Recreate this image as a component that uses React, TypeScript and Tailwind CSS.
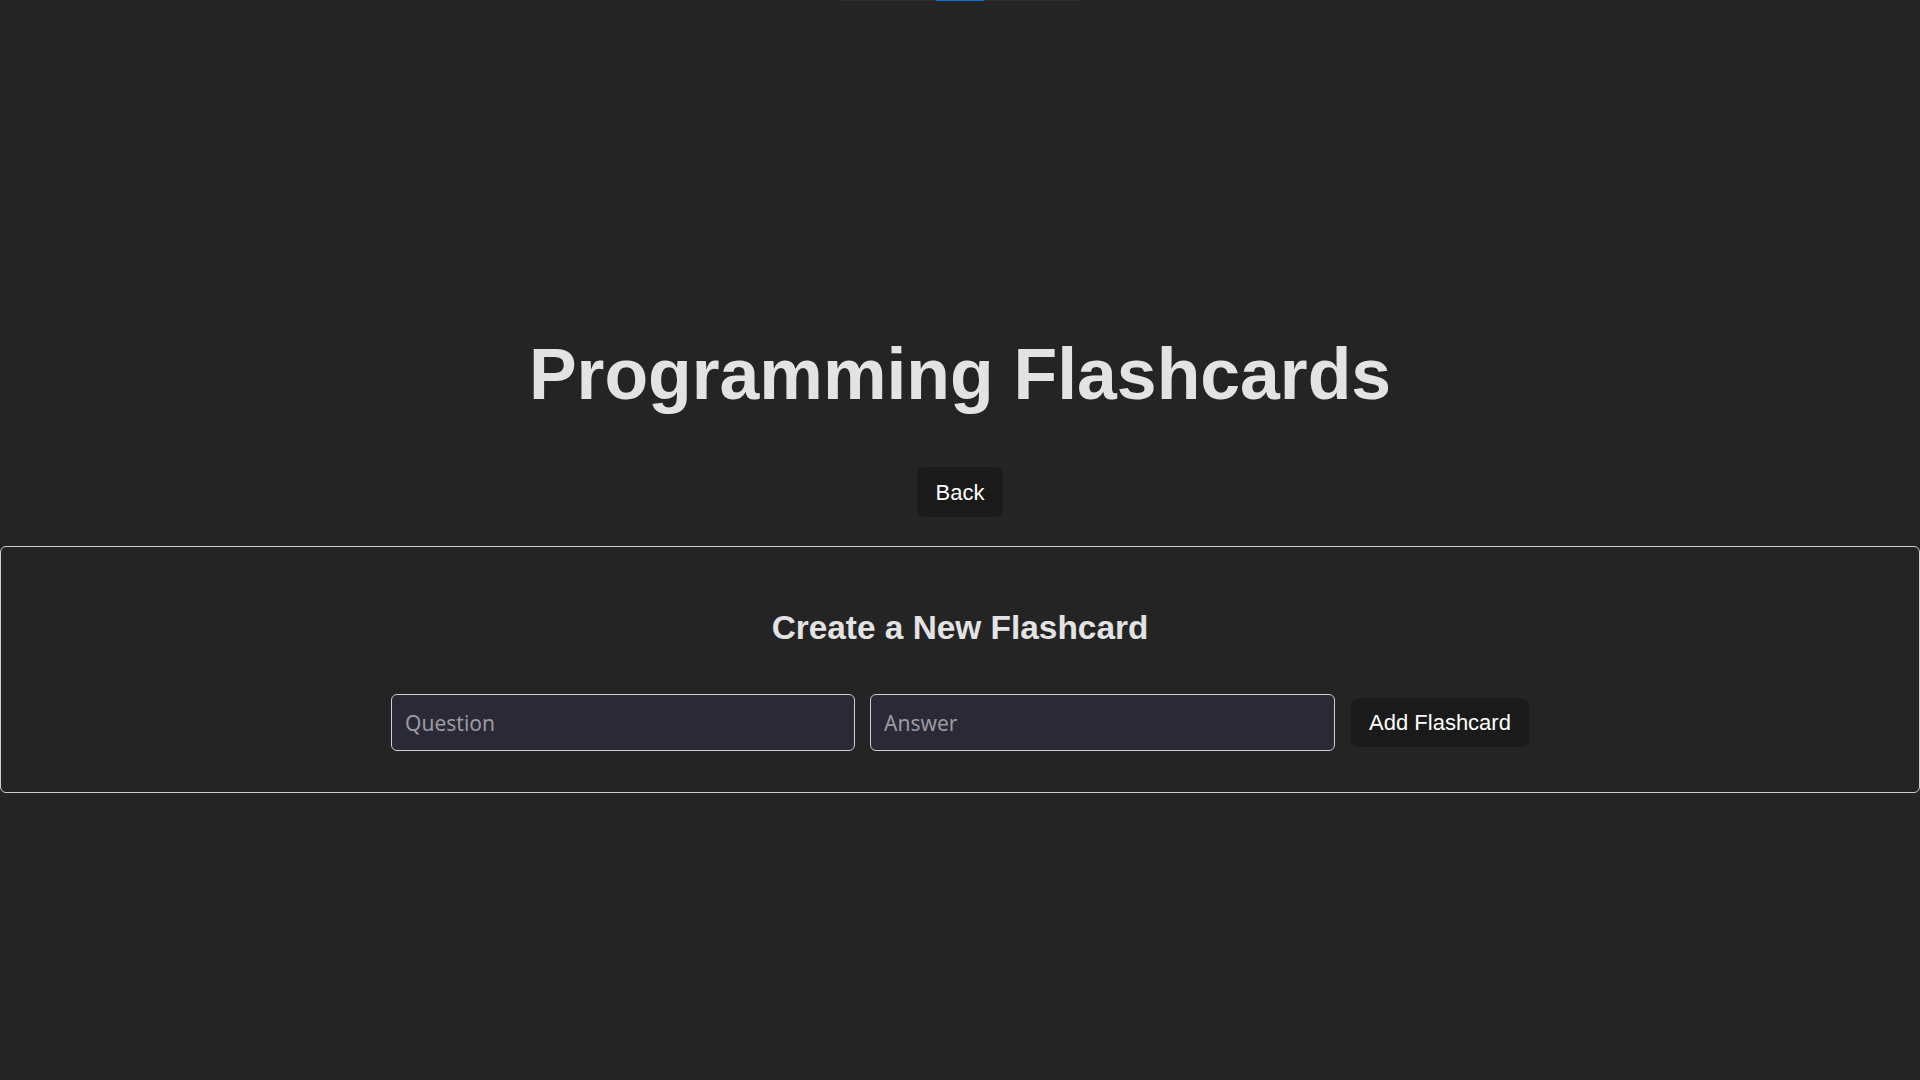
import React, { useState } from 'react'

const sans = { fontFamily: '"Liberation Sans", Arial, sans-serif' }
const inputFont = { fontFamily: '"Noto Sans", "Open Sans", sans-serif' }

export default function App() {
  const [question, setQuestion] = useState('')
  const [answer, setAnswer] = useState('')

  return (
    <div
      className="min-h-screen w-full bg-[#242424] text-[#e3e3e3] flex flex-col items-center"
      style={sans}
    >
      {/* scrolled-off indicator strip */}
      <div className="flex h-px w-[240px]">
        <div className="w-[96px] bg-[#2e2e2e]" />
        <div className="w-[48px] bg-[#0b6fd6]" />
        <div className="w-[96px] bg-[#2e2e2e]" />
      </div>

      <h1 className="mt-[333px] text-[71.5px] leading-[80px] font-bold">Programming Flashcards</h1>

      <button className="mt-[53px] h-[50px] px-[19px] rounded-[8px] bg-[#1a1a1a] text-white text-[22px]">
        Back
      </button>

      <div className="mt-[29px] w-full h-[247px] border border-[#cfcfcf] rounded-[6px] flex flex-col items-center pt-[61px]">
        <h2 className="text-[33.4px] leading-[40px] font-bold">Create a New Flashcard</h2>
        <div className="mt-[46px] flex items-center gap-[15px]">
          <input
            value={question}
            onChange={(e) => setQuestion(e.target.value)}
            placeholder="Question"
            className="w-[464px] h-[57px] px-[13px] rounded-[6px] border border-[#cfcfcf] bg-[#2a2935] text-[21px] text-[#e3e3e3] placeholder:text-[#9a9aa2] outline-none"
            style={inputFont}
          />
          <input
            value={answer}
            onChange={(e) => setAnswer(e.target.value)}
            placeholder="Answer"
            className="w-[465px] h-[57px] px-[13px] rounded-[6px] border border-[#cfcfcf] bg-[#2a2935] text-[21px] text-[#e3e3e3] placeholder:text-[#9a9aa2] outline-none"
            style={inputFont}
          />
          <button className="ml-px h-[49px] px-[18px] rounded-[8px] bg-[#1a1a1a] text-white text-[22px]">
            Add Flashcard
          </button>
        </div>
      </div>
    </div>
  )
}
